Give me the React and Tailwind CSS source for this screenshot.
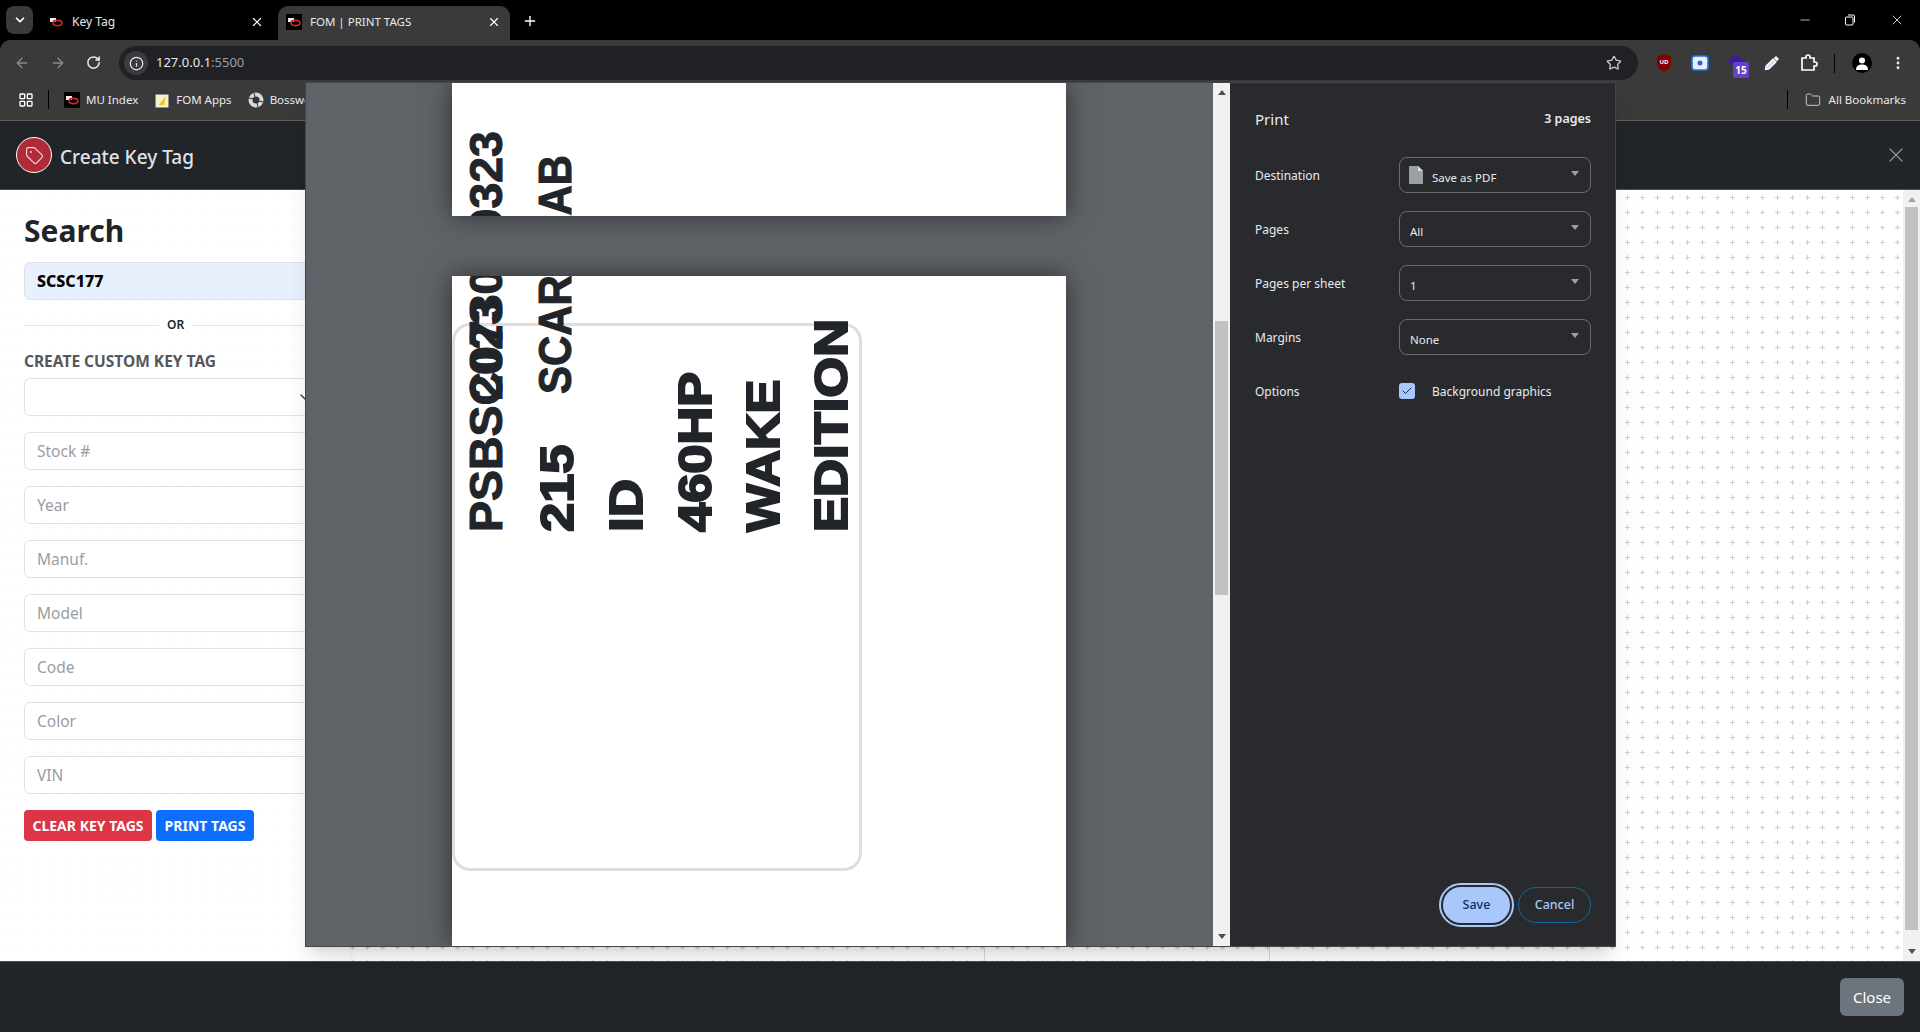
import {
  ArrowLeft,
  ArrowRight,
  Check,
  ChevronDown,
  EllipsisVertical,
  Folder,
  Info,
  LayoutGrid,
  Minus,
  Plus,
  RotateCw,
  Star,
  Tag,
  X,
} from "lucide-react";

const uiFont = "font-['Noto_Sans',sans-serif]";

function Favicon() {
  return (
    <svg width="16" height="16" viewBox="0 0 16 16" className="shrink-0">
      <rect width="16" height="16" fill="#000" />
      <rect x="2" y="4" width="6" height="4" fill="#eee" />
      <ellipse cx="9.5" cy="9" rx="4.5" ry="2.6" fill="none" stroke="#d4212a" strokeWidth="1.6" />
    </svg>
  );
}

function Caret() {
  return <span className="border-x-[4px] border-t-[5px] border-x-transparent border-t-[#9aa0a6]" />;
}

function PrintSelect({ children, icon }) {
  return (
    <div className="-mt-[2px] w-[192px] h-[36px] rounded-lg border border-[#6a6b6e] flex items-center pl-[10px] pr-[11px] text-[11.5px] text-[#e8eaed]">
      {icon}
      <span className="flex-1 pt-[6px]">{children}</span>
      <span className="mb-[3px] flex">
        <Caret />
      </span>
    </div>
  );
}

function PrintRow({ label, children }) {
  return (
    <div className="flex items-center h-[36px]">
      <span className="w-[144px] text-[12px] text-[#e8eaed]">{label}</span>
      {children}
    </div>
  );
}

function SheetText({ className, children }) {
  return (
    <span
      className={
        "absolute h-[46px] origin-bottom-left whitespace-nowrap font-['Liberation_Sans',sans-serif] font-bold text-[46px] leading-none text-[#212529] " +
        className
      }
    >
      {children}
    </span>
  );
}

// the same sheet is drawn on both pages, each page clips its own part
function Sheet() {
  return (
    <>
      <div className="absolute left-0 top-[47px] w-[410px] h-[548px] rounded-[18px] border-[3px] border-[#dedede]" />
      <SheetText className="left-[57px] top-[210px] [-webkit-text-stroke:1px_#212529] [transform:rotate(-90deg)_scaleX(1.01)]">PSBSC0730323</SheetText>
      <SheetText className="left-[57px] top-[78px] [-webkit-text-stroke:1px_#212529] [transform:rotate(-90deg)_scaleX(0.98)]">2023</SheetText>
      <SheetText className="left-[128px] top-[210px] [-webkit-text-stroke:2px_#212529] [transform:rotate(-90deg)_scaleX(1.14)]">215</SheetText>
      <SheetText className="left-[126px] top-[72px] [-webkit-text-stroke:1px_#212529] [transform:rotate(-90deg)_scaleX(0.91)]">SCARAB</SheetText>
      <SheetText className="left-[197px] top-[210px] [-webkit-text-stroke:2px_#212529] [transform:rotate(-90deg)_scaleX(1.15)]">ID</SheetText>
      <SheetText className="left-[266px] top-[210px] [-webkit-text-stroke:2px_#212529] [transform:rotate(-90deg)_scaleX(1.14)]">460HP</SheetText>
      <SheetText className="left-[334px] top-[210px] [-webkit-text-stroke:2px_#212529] [transform:rotate(-90deg)_scaleX(1.105)]">WAKE</SheetText>
      <SheetText className="left-[402px] top-[210px] [-webkit-text-stroke:2px_#212529] [transform:rotate(-90deg)_scaleX(1.143)]">EDITION</SheetText>
    </>
  );
}

function PrintDialog() {
  return (
    <div className={"absolute left-[305px] top-[82px] w-[1311px] h-[865px] flex border border-[#43464a] shadow-xl " + uiFont}>
      {/* preview */}
      <div className="flex-1 bg-[#5f6368] overflow-hidden pl-[146px] flex flex-col gap-[60px]">
        <div className="relative w-[614px] h-[133px] shrink-0 bg-white shadow-[0_0_24px_rgba(0,0,0,0.55)]">
          <div className="absolute inset-0 overflow-hidden">
            <div className="absolute left-0 top-[133px] w-0 h-0">
              <Sheet />
            </div>
          </div>
        </div>
        <div className="relative w-[614px] h-[670px] shrink-0 bg-white overflow-hidden shadow-[0_0_24px_rgba(0,0,0,0.55)]">
          <Sheet />
        </div>
      </div>

      {/* preview scrollbar */}
      <div className="w-[17px] bg-[#f1f1f1] flex flex-col items-center">
        <span className="mt-[7px] border-x-[4px] border-b-[5px] border-x-transparent border-b-[#505050]" />
        <div className="mt-[226px] w-[13px] h-[274px] bg-[#c1c1c1]" />
        <span className="mt-auto mb-[7px] border-x-[4px] border-t-[5px] border-x-transparent border-t-[#505050]" />
      </div>

      {/* settings */}
      <div className="w-[385px] bg-[#292a2d] pl-[25px] pr-[24px] flex flex-col relative">
        <div className="flex items-center justify-between h-[28px] mt-[22px]">
          <span className="text-[15px] text-[#e8eaed]">Print</span>
          <span className="text-[12.5px] font-semibold text-[#e8eaed]">3 pages</span>
        </div>
        <div className="flex flex-col gap-[18px] mt-[25px]">
          <PrintRow label="Destination">
            <PrintSelect
              icon={
                <svg width="14" height="18" viewBox="0 0 14 18" className="mr-[9px] -ml-[1px] shrink-0">
                  <path d="M1 0h8l5 5v12a1 1 0 0 1-1 1H1a1 1 0 0 1-1-1V1a1 1 0 0 1 1-1z" fill="#9aa0a6" />
                  <path d="M9 0l5 5H9z" fill="#dadce0" />
                </svg>
              }
            >
              Save as PDF
            </PrintSelect>
          </PrintRow>
          <PrintRow label="Pages">
            <PrintSelect>All</PrintSelect>
          </PrintRow>
          <PrintRow label="Pages per sheet">
            <PrintSelect>1</PrintSelect>
          </PrintRow>
          <PrintRow label="Margins">
            <PrintSelect>None</PrintSelect>
          </PrintRow>
        </div>
        <div className="flex items-center h-[16px] mt-[28px]">
          <span className="w-[144px] text-[12px] text-[#e8eaed]">Options</span>
          <span className="-mt-[2px] w-[16px] h-[16px] rounded-[3px] bg-[#a8c7fa] flex items-center justify-center">
            <Check size={12} strokeWidth={2} className="text-[#062e6f]" />
          </span>
          <span className="ml-[17px] text-[12px] text-[#e8eaed]">Background graphics</span>
        </div>
        <div className="mt-auto mb-[23px] flex items-center justify-end gap-[8px]">
          <button className="w-[67px] h-[36px] rounded-full bg-[#a8c7fa] text-[12.5px] font-medium text-[#062e6f] outline-2 outline-offset-2 outline-[#a8c7fa]">
            Save
          </button>
          <button className="w-[73px] h-[36px] rounded-full border border-[#0b6b9e] text-[12.5px] font-medium text-[#a8c7fa]">
            Cancel
          </button>
        </div>
      </div>
    </div>
  );
}

function ChromeBar() {
  return (
    <div className={"shrink-0 " + uiFont}>
      {/* tabs */}
      <div className="h-[40px] bg-black flex items-end relative">
        <div className="absolute left-[6px] top-[6px] w-[27px] h-[28px] rounded-lg bg-[#3a3a3a] flex items-center justify-center">
          <ChevronDown size={14} strokeWidth={3} className="text-white" />
        </div>
        <div className="ml-[48px] w-[230px] h-[34px] flex items-center pb-[3px] text-[12px] text-[#e8eaed]">
          <Favicon />
          <span className="ml-[8px] flex-1">Key Tag</span>
          <X size={14} className="mr-[14px] text-white" />
        </div>
        <div className="w-[232px] h-[34px] rounded-t-[10px] bg-[#3a3a3a] flex items-center pb-[3px] pl-[8px] text-[11.5px] text-[#e8eaed]">
          <Favicon />
          <span className="ml-[8px] flex-1">FOM | PRINT TAGS</span>
          <X size={14} className="mr-[9px] text-white" />
        </div>
        <Plus size={16} className="ml-[12px] mb-[11px] text-white" />
        <div className="ml-auto h-full flex items-center text-white">
          <Minus size={14} strokeWidth={1.2} className="mr-[32px]" />
          <svg width="12" height="12" viewBox="0 0 12 12" className="mr-[33px]" fill="none" stroke="#fff">
            <rect x="1.5" y="3" width="7.5" height="8" rx="1" />
            <path d="M4 1h5.5a1 1 0 0 1 1 1v6.5" />
          </svg>
          <X size={16} strokeWidth={1.2} className="mr-[15px]" />
        </div>
      </div>

      {/* toolbar */}
      <div className="h-[40px] rounded-t-[10px] bg-[#3a3a3a] flex items-start pt-[6px] relative">
        <ArrowLeft size={16} className="ml-[14px] mt-[9px] text-[#8a8a8a]" />
        <ArrowRight size={16} className="ml-[20px] mt-[9px] text-[#8a8a8a]" />
        <RotateCw size={15} strokeWidth={2.4} className="ml-[20px] mt-[9px] text-[#e8eaed]" />
        <div className="ml-[18px] w-[1519px] h-[34px] rounded-full bg-[#202124] flex items-center pl-[5px] pr-[16px]">
          <span className="w-[24px] h-[24px] rounded-full bg-[#3a3b3d] flex items-center justify-center">
            <Info size={15} className="text-[#e8eaed]" />
          </span>
          <span className="ml-[8px] flex-1 text-[13px] text-[#e8eaed]">
            127.0.0.1<span className="text-[#9aa0a6]">:5500</span>
          </span>
          <Star size={16} className="text-[#c4c7c5]" />
        </div>
        <div className="flex items-center h-[34px] text-white">
          <svg width="14" height="18" viewBox="0 0 14 18" className="ml-[19px]">
            <path d="M7 0l7 2.5V9c0 4-3 7.5-7 9-4-1.5-7-5-7-9V2.500z" fill="#800000" />
            <text x="7" y="10" textAnchor="middle" fontSize="6" fontWeight="700" fill="#fff">
              UD
            </text>
          </svg>
          <svg width="18" height="16" viewBox="0 0 18 16" className="ml-[20px]">
            <rect x="1" y="1" width="16" height="14" rx="3" fill="#e8f0fe" stroke="#1a73e8" strokeWidth="1.6" />
            <circle cx="9" cy="8" r="2.500" fill="#3b5bdb" />
          </svg>
          <span className="relative ml-[18px] w-[18px] h-[18px]">
            <svg width="18" height="18" viewBox="0 0 18 18">
              <path d="M9 0l8 7-8 8-8-8z" fill="#3b1a9e" />
            </svg>
            <span className="absolute left-[6px] top-[8px] w-[16px] h-[16px] rounded-[2px] bg-[#6741c3] text-[10px] leading-[16px] font-bold text-center text-white">
              15
            </span>
          </span>
          <svg width="18" height="18" viewBox="0 0 18 18" className="ml-[18px]">
            <path d="M13 2l3 3-2.200 2.200-3-3z" fill="#fff" />
            <path d="M10 5l3 3-7 7-3.500.5.5-3.500z" fill="#cfe0ff" stroke="#fff" strokeWidth="1.200" />
          </svg>
          <svg width="18" height="18" viewBox="0 0 18 18" className="ml-[19px]" fill="none" stroke="#fff" strokeWidth="1.700">
            <path d="M2 4h4V3a2 2 0 0 1 4 0v1h4v4h1a1.800 1.800 0 0 1 0 4h-1v4H2z" />
          </svg>
          <span className="ml-[16px] w-[1px] h-[19px] bg-black" />
          <span className="ml-[17px] w-[20px] h-[20px] rounded-full bg-black flex items-center justify-center overflow-hidden">
            <svg width="14" height="14" viewBox="0 0 14 14" fill="#fff">
              <circle cx="7" cy="4.500" r="3" />
              <path d="M1 14c0-4 2.500-5.500 6-5.500s6 1.500 6 5.500z" />
            </svg>
          </span>
          <EllipsisVertical size={16} strokeWidth={2.4} className="ml-[18px] text-[#e8eaed]" />
        </div>
      </div>

      {/* bookmarks */}
      <div className="h-[41px] bg-[#3a3a3a] border-b border-[#5f5f5f] flex items-center text-[11.5px] text-[#e8eaed] pb-[1px]">
        <LayoutGrid size={16} className="ml-[18px] text-white" />
        <span className="ml-[14px] w-[1px] h-[19px] bg-black" />
        <span className="ml-[15px]">
          <Favicon />
        </span>
        <span className="ml-[6px]">MU Index</span>
        <svg width="16" height="16" viewBox="0 0 16 16" className="ml-[16px]">
          <rect x="1" y="2" width="14" height="14" fill="#f5f0d0" stroke="#333" />
          <path d="M5 13l7-9-2 9z" fill="#f4c20d" />
        </svg>
        <span className="ml-[6px]">FOM Apps</span>
        <svg width="16" height="16" viewBox="0 0 16 16" className="ml-[16px]">
          <circle cx="8" cy="8" r="7.500" fill="#d8d8d8" />
          <circle cx="8" cy="8" r="3.500" fill="#333" />
          <path d="M1 6l5 1M15 10l-4-1M6 1l1 4M10 15l-1-4" stroke="#333" />
        </svg>
        <span className="ml-[6px]">Bossweb</span>
        <span className="ml-auto w-[1px] h-[19px] bg-black" />
        <Folder size={16} strokeWidth={1.500} className="ml-[17px] text-[#c4c7c5]" />
        <span className="ml-[8px] mr-[14px]">All Bookmarks</span>
      </div>
    </div>
  );
}

function Field({ placeholder }) {
  return (
    <input
      readOnly
      placeholder={placeholder}
      className="w-full h-[38px] rounded-md border border-[#dee2e6] bg-white px-3 text-[15.5px] placeholder:text-[#9a9da1]"
    />
  );
}

function LeftPanel() {
  return (
    <div className="w-[350px] shrink-0 bg-white/90 pl-[24px] pr-[24px] pt-[22px] shadow-[0_0_6px_rgba(0,0,0,0.08)]">
      <h2 className="text-[30px] leading-[38px] font-bold text-[#212529]">Search</h2>
      <input
        readOnly
        value="SCSC177"
        className="mt-[12px] w-full h-[38px] rounded-md border border-[#dee2e6] bg-[#e8f0fe] px-3 text-[16px] font-extrabold text-black"
      />
      <div className="mt-[15px] h-[20px] flex items-center gap-[8px]">
        <span className="w-[135px] h-[1px] bg-[#e3e3e3]" />
        <span className="text-[12px] font-semibold text-[#212529]">OR</span>
        <span className="flex-1 h-[1px] bg-[#e3e3e3]" />
      </div>
      <div className="mt-[16px] h-[20px] text-[15.5px] leading-[20px] font-bold whitespace-nowrap text-[#54585c]">CREATE CUSTOM KEY TAG</div>
      <div className="mt-[7px] flex flex-col gap-[16px]">
        <div className="w-full h-[38px] rounded-md border border-[#dee2e6] bg-white flex items-center justify-end pr-[12px]">
          <ChevronDown size={16} strokeWidth={2} className="text-[#343a40]" />
        </div>
        <Field placeholder="Stock #" />
        <Field placeholder="Year" />
        <Field placeholder="Manuf." />
        <Field placeholder="Model" />
        <Field placeholder="Code" />
        <Field placeholder="Color" />
        <Field placeholder="VIN" />
      </div>
      <div className="mt-[16px] flex gap-[4px]">
        <button className="w-[128px] h-[31px] rounded bg-[#dc3545] text-[14px] font-bold text-white whitespace-nowrap">CLEAR KEY TAGS</button>
        <button className="w-[98px] h-[31px] rounded bg-[#0d6efd] text-[14px] font-bold text-white whitespace-nowrap">PRINT TAGS</button>
      </div>
    </div>
  );
}

export default function App() {
  return (
    <div className={"relative w-[1920px] h-[1032px] flex flex-col overflow-hidden bg-black " + uiFont}>
      <ChromeBar />

      {/* modal header */}
      <div className="h-[69px] shrink-0 bg-[#212529] border-b border-[#495057] flex items-center pl-[16px] pr-[12px]">
        <span className="w-[36px] h-[36px] rounded-full bg-[#b02a37] border border-white flex items-center justify-center">
          <Tag size={19} strokeWidth={1.5} className="text-[#f1d4d7] rotate-0" />
        </span>
        <span className="ml-[8px] mt-[4px] text-[19px] font-medium text-[#dee2e6]">Create Key Tag</span>
        <X size={24} strokeWidth={1.2} className="ml-auto text-[#8d9297]" />
      </div>

      {/* modal body */}
      <div className="flex-1 flex bg-white bg-[radial-gradient(2.2px_0.8px_at_center,#cfcfcf_99%,transparent_100%),radial-gradient(0.8px_2.2px_at_center,#cfcfcf_99%,transparent_100%)] bg-[length:15px_15px]">
        <LeftPanel />
        <div className="flex-1 flex relative">
          <span className="absolute left-[634px] top-[756px] bottom-0 w-[1px] bg-[#d8d8d8]" />
          <span className="absolute left-[919px] top-[756px] bottom-0 w-[1px] bg-[#d8d8d8]" />
        </div>
        <div className="w-[17px] bg-[#f1f1f1] flex flex-col items-center">
          <span className="mt-[7px] border-x-[4px] border-b-[5px] border-x-transparent border-b-[#a3a3a3]" />
          <div className="mt-[5px] w-[13px] h-[723px] bg-[#c1c1c1]" />
          <span className="mt-auto mb-[7px] border-x-[4px] border-t-[5px] border-x-transparent border-t-[#505050]" />
        </div>
      </div>

      {/* modal footer */}
      <div className="h-[71px] shrink-0 bg-[#212529] border-t border-[#495057] flex items-center justify-end pr-[16px]">
        <button className="w-[64px] h-[38px] rounded-md bg-[#6c757d] text-[15px] text-white">Close</button>
      </div>

      <PrintDialog />
    </div>
  );
}
